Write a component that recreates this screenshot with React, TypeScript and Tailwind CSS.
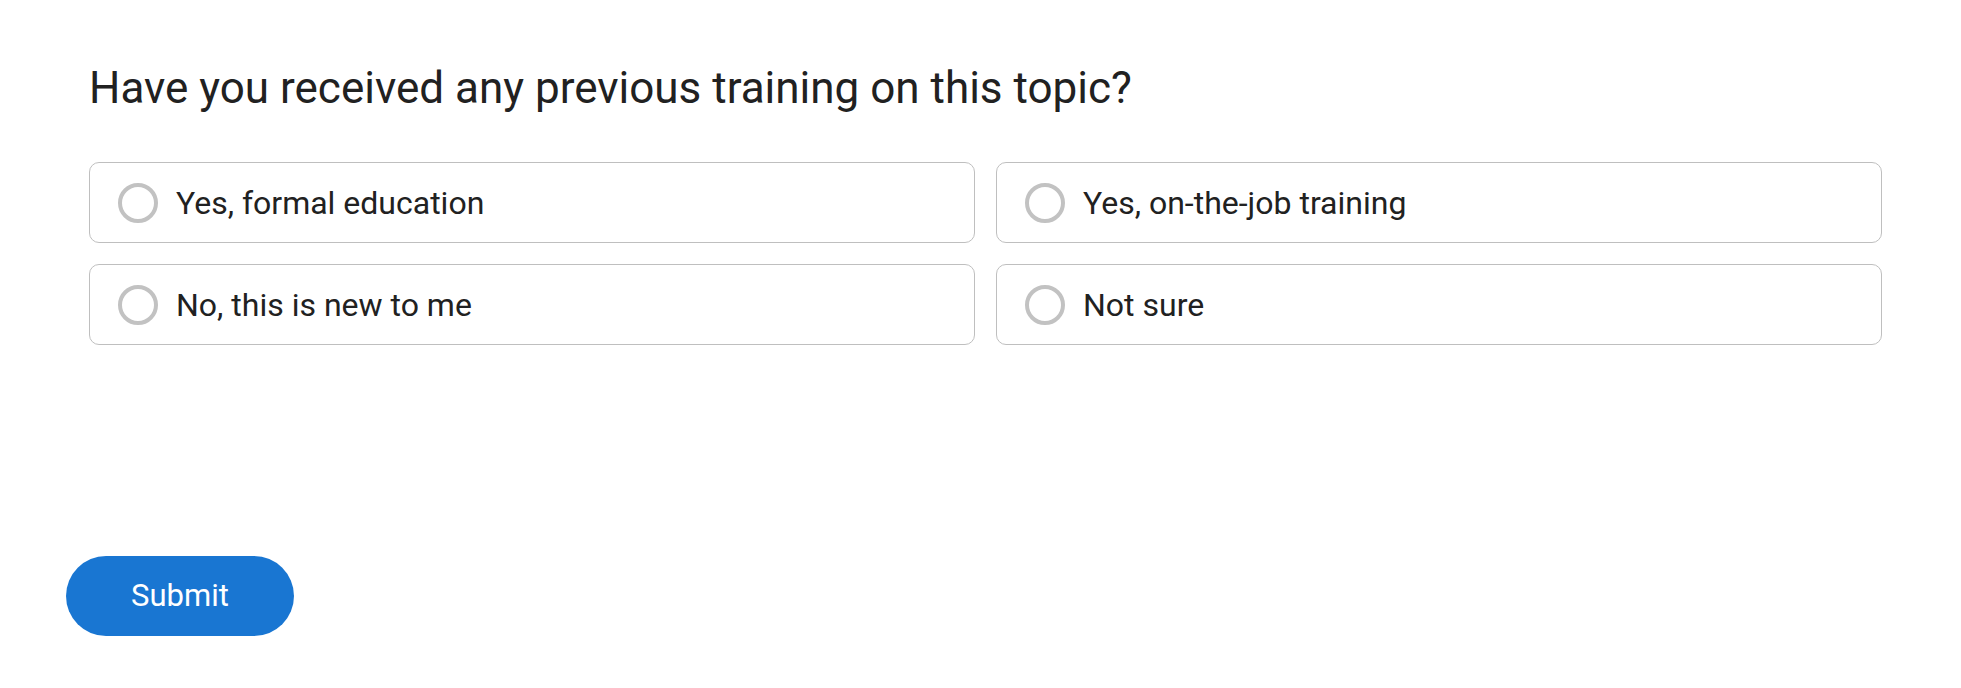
import { useState } from 'react';

const options = [
  'Yes, formal education',
  'Yes, on-the-job training',
  'No, this is new to me',
  'Not sure',
];

export default function App() {
  const [selected, setSelected] = useState<string | null>(null);

  return (
    <div className="min-h-screen bg-white font-['Roboto',sans-serif] text-[#212121]">
      {/* Question + options */}
      <div className="pl-[89px] pr-[79px] pt-[61px]">
        <h1 className="text-[44px] leading-[54px] font-normal">
          Have you received any previous training on this topic?
        </h1>

        <div className="mt-[47px] grid grid-cols-2 gap-[21px]">
          {options.map((opt) => (
            <button
              key={opt}
              onClick={() => setSelected(opt)}
              className="flex h-[81px] items-center rounded-[10px] border border-[#bfbfbf] bg-white pl-[28px] text-left"
            >
              <span
                className={`h-[40px] w-[40px] shrink-0 rounded-full border-[4px] ${
                  selected === opt ? 'border-[#1976d2]' : 'border-[#c2c2c2]'
                }`}
              />
              <span className="ml-[18px] text-[32px] leading-[38px]">{opt}</span>
            </button>
          ))}
        </div>
      </div>

      {/* Submit */}
      <div className="pl-[66px] mt-[211px]">
        <button className="h-[80px] w-[228px] rounded-full bg-[#1976d2] text-[31px] font-normal text-white">
          Submit
        </button>
      </div>
    </div>
  );
}
